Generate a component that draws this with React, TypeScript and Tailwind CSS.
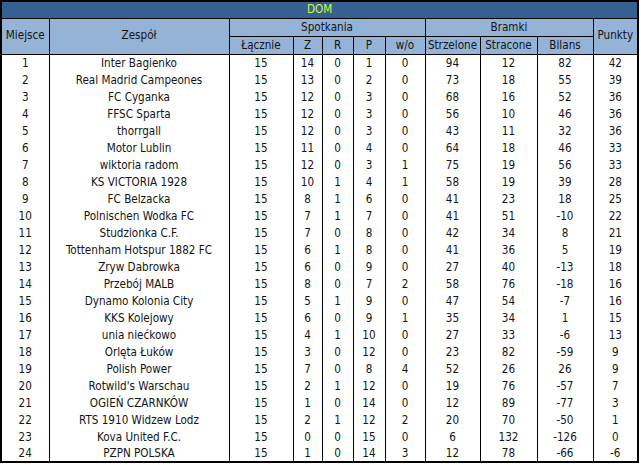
import React from "react";

type Row = [number, string, number, number, number, number, number, number, number, number, number];

const rows: Row[] = [
  [1, "Inter Bagienko", 15, 14, 0, 1, 0, 94, 12, 82, 42],
  [2, "Real Madrid Campeones", 15, 13, 0, 2, 0, 73, 18, 55, 39],
  [3, "FC Cyganka", 15, 12, 0, 3, 0, 68, 16, 52, 36],
  [4, "FFSC Sparta", 15, 12, 0, 3, 0, 56, 10, 46, 36],
  [5, "thorrgall", 15, 12, 0, 3, 0, 43, 11, 32, 36],
  [6, "Motor Lublin", 15, 11, 0, 4, 0, 64, 18, 46, 33],
  [7, "wiktoria radom", 15, 12, 0, 3, 1, 75, 19, 56, 33],
  [8, "KS VICTORIA 1928", 15, 10, 1, 4, 1, 58, 19, 39, 28],
  [9, "FC Belzacka", 15, 8, 1, 6, 0, 41, 23, 18, 25],
  [10, "Polnischen Wodka FC", 15, 7, 1, 7, 0, 41, 51, -10, 22],
  [11, "Studzionka C.F.", 15, 7, 0, 8, 0, 42, 34, 8, 21],
  [12, "Tottenham Hotspur 1882 FC", 15, 6, 1, 8, 0, 41, 36, 5, 19],
  [13, "Zryw Dabrowka", 15, 6, 0, 9, 0, 27, 40, -13, 18],
  [14, "Przebój MALB", 15, 8, 0, 7, 2, 58, 76, -18, 16],
  [15, "Dynamo Kolonia City", 15, 5, 1, 9, 0, 47, 54, -7, 16],
  [16, "KKS Kolejowy", 15, 6, 0, 9, 1, 35, 34, 1, 15],
  [17, "unia niećkowo", 15, 4, 1, 10, 0, 27, 33, -6, 13],
  [18, "Orlęta Łuków", 15, 3, 0, 12, 0, 23, 82, -59, 9],
  [19, "Polish Power", 15, 7, 0, 8, 4, 52, 26, 26, 9],
  [20, "Rotwild's Warschau", 15, 2, 1, 12, 0, 19, 76, -57, 7],
  [21, "OGIEŃ CZARNKÓW", 15, 1, 0, 14, 0, 12, 89, -77, 3],
  [22, "RTS 1910 Widzew Lodz", 15, 2, 1, 12, 2, 20, 70, -50, 1],
  [23, "Kova United F.C.", 15, 0, 0, 15, 0, 6, 132, -126, 0],
  [24, "PZPN POLSKA", 15, 1, 0, 14, 3, 12, 78, -66, -6],
];

const widths = [48, 180, 64, 29, 31, 32, 40, 55, 57, 56, 45];

export default function App() {
  return (
    <div className="w-[641px] h-[465px] bg-white font-['DejaVu_Sans_Condensed','DejaVu_Sans',sans-serif] text-[11.6px] text-[#141414]">
      <table className="table-fixed border-collapse border-2 border-black w-[639px]">
        <colgroup>
          {widths.map((w, i) => (
            <col key={i} style={{ width: w }} />
          ))}
        </colgroup>
        <thead>
          <tr className="h-[17px] bg-[#366092]">
            <th colSpan={11} className="border-b border-black p-0 font-normal leading-[15px] text-[#ccff33]">
              DOM
            </th>
          </tr>
          <tr className="h-[18px] bg-[#95b3d7]">
            <th rowSpan={2} className="border border-black p-0 font-normal">Miejsce</th>
            <th rowSpan={2} className="border border-black p-0 font-normal">Zespół</th>
            <th colSpan={5} className="border border-black p-0 font-normal leading-[16px]">Spotkania</th>
            <th colSpan={3} className="border border-black p-0 font-normal leading-[16px]">Bramki</th>
            <th rowSpan={2} className="border border-black p-0 font-normal">Punkty</th>
          </tr>
          <tr className="h-[18px] bg-[#95b3d7]">
            {["Łącznie", "Z", "R", "P", "w/o", "Strzelone", "Stracone", "Bilans"].map((h) => (
              <th key={h} className="border border-black p-0 font-normal leading-[16px]">
                {h}
              </th>
            ))}
          </tr>
        </thead>
        <tbody>
          {rows.map((r) => (
            <tr key={r[0]} className="h-[17px]">
              {r.map((v, i) => (
                <td key={i} className="border-x border-black p-0 text-center leading-[16px] whitespace-nowrap overflow-hidden">
                  {v}
                </td>
              ))}
            </tr>
          ))}
        </tbody>
      </table>
    </div>
  );
}
